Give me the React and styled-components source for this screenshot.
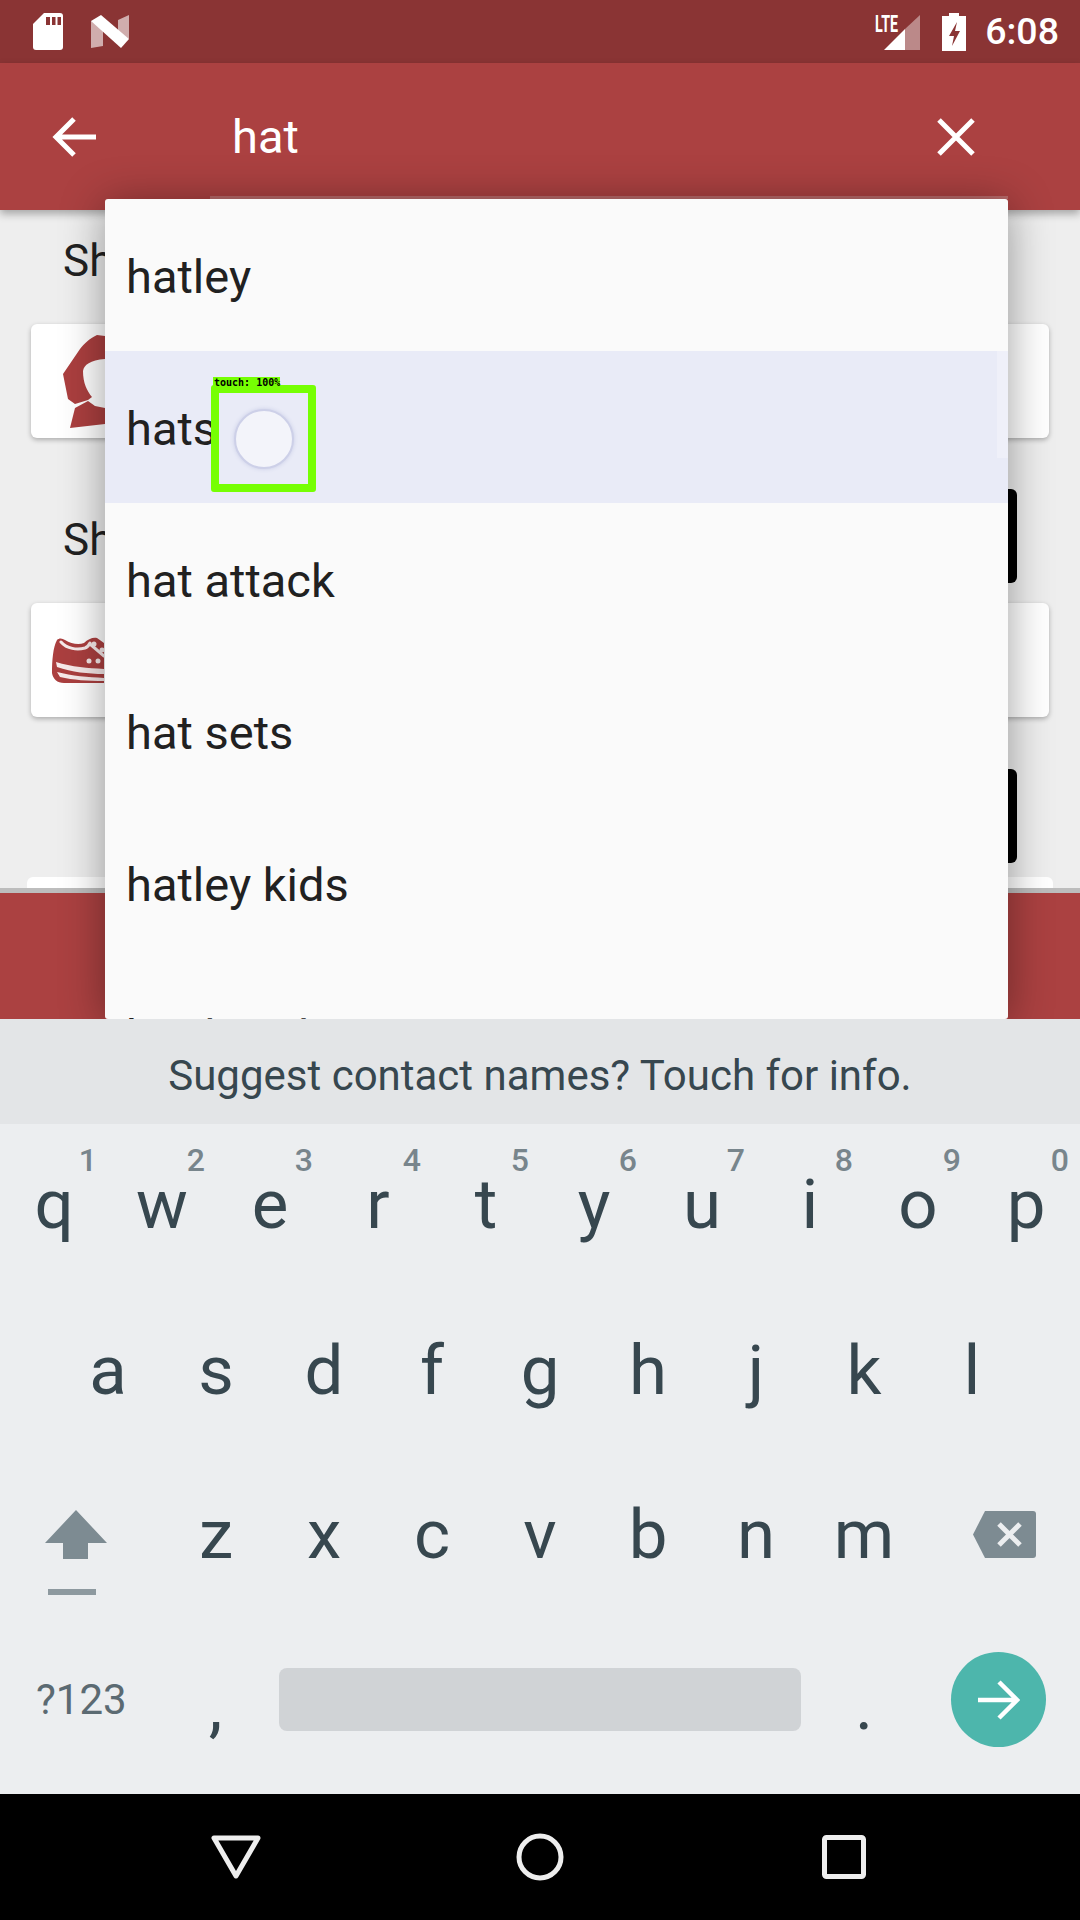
import React from "react";
import styled, { createGlobalStyle } from "styled-components";

const Global = createGlobalStyle`
  html, body { margin: 0; padding: 0; background: #000; }
  * { box-sizing: border-box; }
`;
const Screen = styled.div`
  position: relative; width: 1080px; height: 1920px; overflow: hidden;
  display: flex; flex-direction: column; background: #eeeeee;
  font-family: Roboto, "Liberation Sans", sans-serif;
`;
const StatusBar = styled.div`
  height: 63px; flex: none; background: #8a3434; display: flex; align-items: center;
  padding: 0 21px 0 33px; color: #fff;
`;
const StatusLeft = styled.div`display: flex; align-items: center; gap: 28px; flex: 1;`;
const StatusRight = styled.div`display: flex; align-items: center; gap: 21px;`;
const Signal = styled.div`position: relative; width: 45px; height: 38px; margin-right: 1px;`;
const LteText = styled.span`
  position: absolute; left: 0; top: 0; font-size: 23px; line-height: 24px; font-weight: 700;
  transform: scaleX(.62); transform-origin: left center;
`;
const Clock = styled.span`font-size: 37.5px; font-weight: 500; line-height: 1; margin-left: -2px;`;
const AppBar = styled.div`
  position: relative; height: 147px; flex: none; background: #ab4141;
  display: flex; align-items: center; padding: 0 0 0 52px; color: #fff;
  box-shadow: 0 4px 8px rgba(0,0,0,.3); z-index: 1;
`;
const Query = styled.div`font-size: 47px; margin-left: 136px; flex: 1; line-height: 1;`;
const CloseWrap = styled.div`margin-right: 105px; display: flex;`;
const Underline = styled.div`
  position: absolute; left: 210px; right: 72px; top: 133px; height: 3px; background: #b96a6a;
`;
const Content = styled.main`
  height: 678px; flex: none; padding: 26px 31px 0; display: flex; flex-direction: column; overflow: hidden;
`;
const SectionTitle = styled.div`
  font-size: 44px; line-height: 50px; color: #212121; padding: ${p => p.$drop || 0}px 0 0 32px;
`;
const Card = styled.div`
  height: 114px; flex: none; margin-top: ${p => p.$gap}px; background: #fff; border-radius: 6px;
  box-shadow: 0 2px 5px rgba(0,0,0,.28); display: flex; align-items: center; padding-left: ${p => p.$pad}px;
`;
const SectionHead = styled.div`
  display: flex; justify-content: space-between; align-items: center; height: 94px; margin-top: 51px;
`;
const SeeAll = styled.div`
  width: 120px; height: 94px; background: #000; border-radius: 6px; margin-right: 32px; flex: none;
`;
const ActionRow = styled.div`display: flex; justify-content: flex-end; flex: none; margin-top: 52px;`;
const NextCard = styled.div`
  height: 30px; flex: none; margin: 14px -4px 0; background: #fff; border-radius: 6px 6px 0 0;
`;
const BottomBar = styled.div`
  height: 131px; flex: none; background: #ab4141; border-top: 5px solid #bdbdbd;
`;
const Popup = styled.div`
  position: absolute; left: 105px; top: 199px; width: 903px; height: 820px; overflow: hidden;
  background: #fafafa; border-radius: 3px; z-index: 2;
`;
const PopupShadow = styled.div`
  position: absolute; left: 105px; top: 199px; width: 903px; height: 820px; z-index: 2;
  box-shadow: 0 4px 44px rgba(0,0,0,.38); border-radius: 3px;
`;
const Row = styled.div`
  height: 152px; padding: 2px 21px 0; display: flex; align-items: center;
  font-size: 47px; color: #212121; background: ${p => p.$on ? "#e9ebf7" : "transparent"};
  position: relative;
`;
const Ripple = styled.div`
  position: absolute; right: 0; top: 0; width: 11px; height: 107px; background: #eff0f9;
`;
const Keyboard = styled.div`
  position: relative; flex: none; height: 775px; background: #eceef0; z-index: 3; display: flex; flex-direction: column;
`;
const Suggest = styled.div`
  height: 105px; flex: none; background: #e3e5e7; color: #37474f; font-size: 42px; padding-top: 8px;
  display: flex; align-items: center; justify-content: center;
`;
const Keys = styled.div`flex: 1; display: flex; flex-direction: column;`;
const KeyRow = styled.div`
  height: 164.5px; flex: none; display: flex; justify-content: center; position: relative;
`;
const Key = styled.div`
  position: relative; width: 108px; flex: none; display: flex; justify-content: center;
  font-size: 69px; color: #37474f; padding-top: ${p => p.$top}px; line-height: 70px;
`;
const Hint = styled.span`
  position: absolute; right: 11px; top: 21px; font-size: 32px; font-weight: 500; line-height: 30px; color: #78858c;
`;
const SideKey = styled.div`
  width: 162px; flex: none; display: flex; padding-top: ${p => p.$top}px; padding-left: ${p => p.$left}px;
`;
const Bottom = styled.div`display: flex; align-items: center; flex: 1; padding-bottom: 12px;`;
const Sym = styled.div`
  width: 162px; padding-left: 36px; flex: none; font-size: 42px; color: #5b6a72;
`;
const Punct = styled.div`
  width: ${p => p.$w}px; flex: none; font-size: 69px; color: #37474f; line-height: 70px; text-align: center;
  padding-right: ${p => p.$shift}px; padding-top: 12px;
`;
const Space = styled.div`
  width: 522px; height: 63px; background: #d0d3d6; border-radius: 8px; flex: none;
`;
const Go = styled.div`
  width: 95px; height: 95px; border-radius: 50%; background: #4db6ac; display: flex; align-items: center; justify-content: center; flex: none;
`;
const NavBar = styled.div`
  height: 126px; flex: none; background: #000; position: relative; z-index: 3;
  display: flex; align-items: center; justify-content: center;
`;
const NavSlot = styled.div`width: 304px; display: flex; justify-content: center;`;
const Touch = styled.div`
  position: absolute; left: 211px; top: 385px; width: 105px; height: 107px; border: 8px solid #76ff03; z-index: 4;
  border-radius: 3px; display: flex; align-items: center; justify-content: center;
`;
const TouchLabel = styled.div`
  position: absolute; left: -6px; top: -16px; width: 67px; height: 12px; background: #76ff03;
  font: bold 10px/12px "DejaVu Sans Mono", monospace; color: #000; white-space: nowrap; padding-left: 1px;
`;
const Dot = styled.div`
  width: 60px; height: 60px; border-radius: 50%; background: #f3f4fa; border: 2px solid #cdd0e8; box-shadow: 0 0 4px #c8cce6;
`;

const Sd = () => (
  <svg width="30" height="37" viewBox="0 0 30 37"><path fill="#fff" d="M11 0h16a3 3 0 0 1 3 3v31a3 3 0 0 1-3 3H3a3 3 0 0 1-3-3V11z"/><path fill="#8a3434" d="M13 4h4v8h-4zM19 4h3.500v8H19zM24.500 4H28v8h-3.500z"/></svg>
);
const NLogo = () => (
  <svg width="38" height="33" viewBox="0 0 38 33"><path fill="#fff" opacity=".6" d="M0 6l12 2v23L0 33zM27 5l11-5v24l-11-6z"/><path fill="#fff" d="M0 6L10 0l28 24-8 9z"/></svg>
);
const SignalIcon = () => (
  <svg width="45" height="38" viewBox="0 0 45 38">
    <path fill="#fff" opacity=".42" d="M30 16L45 2v35H30z"/><path fill="#fff" d="M30 16v21H9z"/>
  </svg>
);
const Battery = () => (
  <svg width="24" height="38" viewBox="0 0 24 38"><path fill="#fff" d="M7 0h10v3h7v35H0V3h7z"/><path fill="#8a3434" d="M15 9L7 23h5l-2 10 8-15h-5z"/></svg>
);
const Back = () => (
  <svg width="44" height="40" viewBox="0 0 44 40" fill="none" stroke="#fff" strokeWidth="5"><path d="M44 20H4M22 2L4 20l18 18"/></svg>
);
const Close = () => (
  <svg width="38" height="38" viewBox="0 0 38 38" fill="none" stroke="#fff" strokeWidth="5"><path d="M2 2l34 34M36 2L2 36"/></svg>
);
const Woman = () => (
  <svg width="42" height="100" viewBox="0 0 42 100">
    <path fill="#ab3f3f" d="M42 5L34 4C26 8 22 12 17 18L0 43l5 25 7 5 13-4 4-3C24 60 20 52 20 40c1-6 7-11 22-12z"/>
    <path fill="#ab3f3f" d="M7 97l5-20 13-7 7 5 10 2v16z"/>
  </svg>
);
const Shoe = () => (
  <svg width="52" height="46" viewBox="0 0 52 46">
    <path fill="#ab3f3f" d="M5 3c2-2 5-2 8 0 6 4 14 5 19 3 4-4 9-6 13-5l7 5v40H12C5 46 1 42 0 36 0 24 1 10 5 3z"/>
    <path fill="none" stroke="#f7eaea" strokeWidth="3" strokeLinecap="round" d="M9 5c6 7 16 8 24 6 3-1 4-3 5-5M38 7l14 12"/>
    <path fill="#f7eaea" d="M4 25c16 5 32 6 48 7v5c-16 0-32-2-47-7zM5 35c15 4 31 5 47 6v3c-16 0-31-1-44-4z"/>
    <circle cx="42" cy="7" r="2.500" fill="#f7eaea"/><circle cx="50" cy="13" r="2.500" fill="#f7eaea"/><circle cx="37" cy="24" r="2.500" fill="#f7eaea"/><circle cx="46" cy="24" r="2.500" fill="#f7eaea"/>
  </svg>
);
const Shift = () => (
  <svg width="62" height="85" viewBox="0 0 62 85"><path fill="#7d8b92" d="M31 0l31 33H43v16H18V33H0z"/><rect x="3" y="79" width="48" height="6" fill="#8d999f"/></svg>
);
const Del = () => (
  <svg width="63" height="47" viewBox="0 0 63 47"><path fill="#7d8b92" d="M12 0h48a3 3 0 0 1 3 3v41a3 3 0 0 1-3 3H12L0 23.500z"/><path stroke="#eceef0" strokeWidth="5" fill="none" d="M26 13l21 21M47 13L26 34"/></svg>
);
const GoArrow = () => (
  <svg width="42" height="40" viewBox="0 0 42 40" fill="none" stroke="#fff" strokeWidth="4.500"><path d="M0 20h38M21 2l18 18-18 18"/></svg>
);
const NavBack = () => (
  <svg width="50" height="44" viewBox="0 0 50 44" fill="none" stroke="#eee" strokeWidth="5" strokeLinejoin="round"><path d="M3 3h44L25 41z"/></svg>
);
const NavHome = () => (
  <svg width="48" height="48" viewBox="0 0 48 48" fill="none" stroke="#eee" strokeWidth="5"><circle cx="24" cy="24" r="21"/></svg>
);
const NavRecent = () => (
  <svg width="44" height="44" viewBox="0 0 44 44" fill="none" stroke="#eee" strokeWidth="5"><rect x="2.500" y="2.500" width="39" height="39" rx="2"/></svg>
);

const top = [["q","1"],["w","2"],["e","3"],["r","4"],["t","5"],["y","6"],["u","7"],["i","8"],["o","9"],["p","0"]];
const suggestions = ["hatley","hats","hat attack","hat sets","hatley kids","hat bands"];

export default function App() {
  return (
    <Screen>
      <Global />
      <StatusBar>
        <StatusLeft><Sd /><NLogo /></StatusLeft>
        <StatusRight>
          <Signal><SignalIcon /><LteText>LTE</LteText></Signal>
          <Battery />
          <Clock>6:08</Clock>
        </StatusRight>
      </StatusBar>
      <AppBar>
        <Back />
        <Query>hat</Query>
        <CloseWrap><Close /></CloseWrap>
        <Underline />
      </AppBar>
      <Content>
        <SectionTitle>Shop by Department</SectionTitle>
        <Card $gap={38} $pad={32}><Woman /></Card>
        <SectionHead><SectionTitle $drop={8}>Shop by Category</SectionTitle><SeeAll /></SectionHead>
        <Card $gap={20} $pad={21}><Shoe /></Card>
        <ActionRow><SeeAll /></ActionRow>
        <NextCard />
      </Content>
      <BottomBar />
      <PopupShadow />
      <Popup>
        {suggestions.map((s, i) => (
          <Row key={s} $on={i === 1}>{s}{i === 1 && <Ripple />}</Row>
        ))}
      </Popup>
      <Touch><TouchLabel>touch: 100%</TouchLabel><Dot /></Touch>
      <Keyboard>
        <Suggest>Suggest contact names? Touch for info.</Suggest>
        <Keys>
          <KeyRow>
            {top.map(([k, n]) => <Key key={k} $top={46}>{k}<Hint>{n}</Hint></Key>)}
          </KeyRow>
          <KeyRow>
            {"asdfghjkl".split("").map(k => <Key key={k} $top={47}>{k}</Key>)}
          </KeyRow>
          <KeyRow>
            <SideKey $top={57} $left={45}><Shift /></SideKey>
            {"zxcvbnm".split("").map(k => <Key key={k} $top={47}>{k}</Key>)}
            <SideKey $top={58} $left={55}><Del /></SideKey>
          </KeyRow>
          <Bottom>
            <Sym>?123</Sym>
            <Punct $w={117} $shift={10}>,</Punct>
            <Space />
            <Punct $w={150} $shift={24}>.</Punct>
            <Go><GoArrow /></Go>
          </Bottom>
        </Keys>
      </Keyboard>
      <NavBar>
        <NavSlot><NavBack /></NavSlot>
        <NavSlot><NavHome /></NavSlot>
        <NavSlot><NavRecent /></NavSlot>
      </NavBar>
    </Screen>
  );
}
